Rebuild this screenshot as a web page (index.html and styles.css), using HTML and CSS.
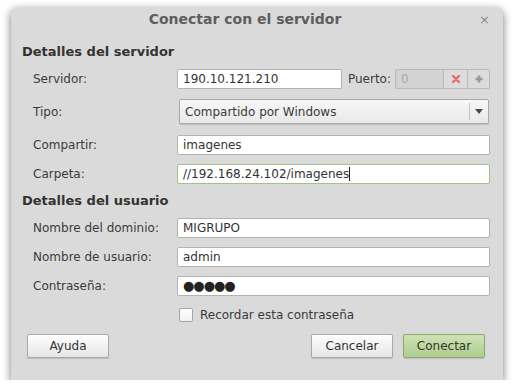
FILE: index.html
```html
<!DOCTYPE html>
<html lang="es">
<head>
    <meta charset="UTF-8">
    <title>Conectar con el servidor</title>
    <link rel="stylesheet" href="styles.css">
</head>
<body>
    <div class="dialog">
        <div class="titlebar">
            Conectar con el servidor
            <span class="close">&#215;</span>
        </div>
        <div class="content">
            <h3>Detalles del servidor</h3>
            <div class="row">
                <label>Servidor:</label>
                <div class="field">
                    <div class="entry grow">190.10.121.210</div>
                    <span class="port-label">Puerto:</span>
                    <div class="spin">
                        <div class="entry disabled">0</div>
                        <div class="spin-btn minus">
                            <svg width="10" height="10" viewBox="0 0 10 10"><path d="M2 2 L8 8 M8 2 L2 8" stroke="#e86a6a" stroke-width="2.4" stroke-linecap="round"/></svg>
                        </div>
                        <div class="spin-btn plus">
                            <svg width="10" height="10" viewBox="0 0 10 10"><path d="M5 1.5 V8.5 M1.5 5 H8.5" stroke="#9a9a9a" stroke-width="2.6"/></svg>
                        </div>
                    </div>
                </div>
            </div>
            <div class="row tall">
                <label>Tipo:</label>
                <div class="field">
                    <div class="combo">
                        <span class="combo-text">Compartido por Windows</span>
                        <span class="combo-arrow">
                            <svg width="8" height="5" viewBox="0 0 8 5"><path d="M0 0 H8 L4 5 Z" fill="#4a4a4a"/></svg>
                        </span>
                    </div>
                </div>
            </div>
            <div class="row gap11">
                <label>Compartir:</label>
                <div class="field"><div class="entry grow">imagenes</div></div>
            </div>
            <div class="row">
                <label>Carpeta:</label>
                <div class="field"><div class="entry grow focused">//192.168.24.102/imagenes<span class="caret"></span></div></div>
            </div>

            <h3 class="second">Detalles del usuario</h3>
            <div class="row">
                <label>Nombre del dominio:</label>
                <div class="field"><div class="entry grow">MIGRUPO</div></div>
            </div>
            <div class="row">
                <label>Nombre de usuario:</label>
                <div class="field"><div class="entry grow">admin</div></div>
            </div>
            <div class="row">
                <label>Contraseña:</label>
                <div class="field"><div class="entry grow dots">●●●●●</div></div>
            </div>
            <div class="check-row">
                <span class="checkbox"></span>
                <span>Recordar esta contraseña</span>
            </div>
            <div class="actions">
                <button class="btn">Ayuda</button>
                <div class="spacer"></div>
                <button class="btn">Cancelar</button>
                <button class="btn primary">Conectar</button>
            </div>
        </div>
    </div>
</body>
</html>
```

FILE: styles.css
```css
body {
    margin: 0;
    background: #ffffff;
    font-family: "DejaVu Sans", sans-serif;
    font-size: 12px;
    color: #3a3a3a;
}

.dialog {
    margin: 7px 0 0 11px;
    width: 492px;
    height: 373px;
    background: #dadada;
    border-radius: 6px 6px 0 0;
    box-shadow: 0 3px 8px rgba(0, 0, 0, 0.55);
}

.titlebar {
    position: relative;
    height: 26px;
    line-height: 25px;
    padding-right: 24px;
    text-align: center;
    font-weight: bold;
    font-size: 14px;
    color: #5e5e5e;
}

.close {
    position: absolute;
    right: 13px;
    top: 0;
    font-size: 13px;
    font-weight: normal;
    color: #8a8a8a;
}

.content {
    padding: 11px 13px 0 11px;
}

h3 {
    margin: 0;
    height: 16px;
    line-height: 16px;
    font-size: 13px;
    font-weight: bold;
    color: #333333;
}

h3.second {
    margin-top: 9px;
}

.row {
    display: flex;
    align-items: center;
    height: 20px;
    margin-top: 9px;
}

.row.tall {
    height: 25px;
    margin-top: 10px;
}

.row.gap11 {
    margin-top: 11px;
}

.row label {
    width: 144px;
    padding-left: 11px;
    flex-shrink: 0;
}

.field {
    flex: 1;
    display: flex;
    align-items: center;
    height: 100%;
}

.entry {
    box-sizing: border-box;
    height: 20px;
    line-height: 18px;
    padding: 0 5px;
    background: #ffffff;
    border: 1px solid #b3b3b3;
    border-radius: 2px;
    color: #333333;
    white-space: nowrap;
}

.grow {
    flex: 1;
}

.focused {
    border-color: #a3c28a;
}

.caret {
    display: inline-block;
    width: 1px;
    height: 14px;
    background: #222;
    vertical-align: -3px;
}

.dots {
    font-size: 13px;
    letter-spacing: -1px;
    color: #222;
}

.port-label {
    margin: 0 4px 0 6px;
}

.spin {
    display: flex;
    height: 20px;
}

.spin .entry {
    width: 49px;
    border-radius: 2px 0 0 2px;
}

.entry.disabled {
    background: #d3d3d3;
    border-color: #b8b8b8;
    color: #a8a8a8;
}

.spin-btn {
    box-sizing: border-box;
    height: 20px;
    display: flex;
    align-items: center;
    justify-content: center;
    background: #dcdcdc;
    border: 1px solid #b8b8b8;
    border-left: none;
}

.spin-btn.minus {
    width: 24px;
}

.spin-btn.plus {
    width: 22px;
    border-radius: 0 2px 2px 0;
}

.combo {
    box-sizing: border-box;
    flex: 1;
    height: 25px;
    margin: 0 1px 0 2px;
    display: flex;
    align-items: center;
    background: linear-gradient(#f7f7f7, #e9e9e9);
    border: 1px solid #a9a9a9;
    border-radius: 2px;
    box-shadow: 0 1px 1px rgba(0, 0, 0, 0.15);
}

.combo-text {
    flex: 1;
    padding-left: 5px;
}

.combo-arrow {
    width: 18px;
    height: 17px;
    display: flex;
    align-items: center;
    justify-content: center;
    border-left: 1px solid #c4c4c4;
}

.check-row {
    display: flex;
    align-items: center;
    height: 14px;
    margin-top: 12px;
    padding-left: 157px;
}

.checkbox {
    box-sizing: border-box;
    width: 14px;
    height: 14px;
    margin-right: 7px;
    background: linear-gradient(#ffffff, #f1f1f1);
    border: 1px solid #a6a6a6;
    border-radius: 2px;
}

.actions {
    display: flex;
    margin-top: 12px;
    padding: 0 5px;
}

.spacer {
    flex: 1;
}

.btn {
    width: 82px;
    height: 24px;
    margin-left: 10px;
    font-family: "DejaVu Sans", sans-serif;
    font-size: 12px;
    color: #333333;
    background: linear-gradient(#fdfdfd, #e6e6e6);
    border: 1px solid #a9a9a9;
    border-radius: 2px;
    box-shadow: 0 1px 1px rgba(0, 0, 0, 0.15);
}

.btn:first-child {
    margin-left: 0;
}

.btn.primary {
    background: linear-gradient(#cfe3b5, #aecb8f);
    border-color: #8eaa70;
    color: #2f3a28;
}
```
